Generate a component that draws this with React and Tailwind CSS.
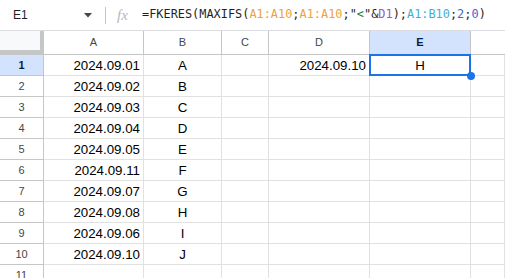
import React from 'react';

const cols = [
  { key: 'A', w: 'w-[100px]' },
  { key: 'B', w: 'w-[78px]' },
  { key: 'C', w: 'w-[47px]' },
  { key: 'D', w: 'w-[101px]' },
  { key: 'E', w: 'w-[101px]' },
  { key: 'F', w: 'flex-1' },
];

const rows = [
  ['2024.09.01', 'A', '', '2024.09.10', 'H'],
  ['2024.09.02', 'B'],
  ['2024.09.03', 'C'],
  ['2024.09.04', 'D'],
  ['2024.09.05', 'E'],
  ['2024.09.11', 'F'],
  ['2024.09.07', 'G'],
  ['2024.09.08', 'H'],
  ['2024.09.06', 'I'],
  ['2024.09.10', 'J'],
  [],
];

const FormulaBar = () => (
  <div className="flex h-[31px] items-center border-b border-[#dadce0] bg-white">
    <div className="flex w-[105px] items-center pl-[13px] pr-[12px] text-[12px] text-[#1f1f1f]">
      <span className="flex-1">E1</span>
      <svg width="8" height="5" viewBox="0 0 8 5" className="mr-[1px]">
        <path d="M0 0h8L4 4.5z" fill="#444746" />
      </svg>
    </div>
    <div className="h-[17px] w-px bg-[#c4c7c5]" />
    <span
      className="ml-[11px] w-[25px] text-[15px] italic text-[#b4b8bb]"
      style={{ fontFamily: '"Liberation Serif", serif' }}
    >
      fx
    </span>
    <div
      className="whitespace-pre text-[11.9px] text-[#1f1f1f]"
      style={{ fontFamily: '"DejaVu Sans Mono", monospace' }}
    >
      =FKERES(MAXIFS(
      <span className="text-[#f0a040]">A1:A10</span>;
      <span className="text-[#f0a040]">A1:A10</span>;
      <span className="text-[#1f1f1f]">"</span>
      <span className="text-[#188038]">&lt;</span>
      <span className="text-[#1f1f1f]">"</span>&amp;
      <span className="text-[#9b59c4]">D1</span>);
      <span className="text-[#3fb0d2]">A1:B10</span>;
      <span className="text-[#3c6bd9]">2</span>;
      <span className="text-[#5b5bd6]">0</span>)
    </div>
  </div>
);

const HeaderRow = () => (
  <div className="flex h-[24px] border-b border-[#c4c7c5]">
    <div className="w-[44px] border-b-4 border-r-4 border-[#c4c7c5] bg-[#f8f9fa]" />
    {cols.map((c) => (
      <div
        key={c.key}
        className={`${c.w} flex items-center justify-center border-r border-[#c4c7c5] text-[11px] ${
          c.key === 'E' ? 'bg-[#d3e3fd] font-bold text-[#041e49]' : 'text-[#444746]'
        } ${c.key === 'F' ? 'border-r-0' : ''}`}
      >
        {c.key === 'F' ? '' : c.key}
      </div>
    ))}
  </div>
);

const App = () => (
  <div
    className="h-[278px] w-[505px] overflow-hidden bg-white"
    style={{ fontFamily: '"Liberation Sans", Arial, sans-serif' }}
  >
    <FormulaBar />
    <HeaderRow />
    {rows.map((r, i) => (
      <div key={i} className="flex h-[21px]">
        <div
          className={`flex w-[44px] items-center justify-center border-b border-r border-[#c4c7c5] text-[11px] ${
            i === 0 ? 'bg-[#d3e3fd] font-bold text-[#041e49]' : 'text-[#444746]'
          }`}
        >
          {i + 1}
        </div>
        {cols.map((c, j) => {
          const v = r[j] || '';
          const right = j === 0 || j === 3;
          const sel = i === 0 && j === 4;
          return (
            <div
              key={c.key}
              className={`${c.w} relative flex items-end border-b border-r border-[#e1e1e1] px-[3px] text-[13.3px] leading-[19px] text-black ${
                right ? 'justify-end' : 'justify-center'
              }`}
            >
              {v}
              {sel && (
                <>
                  <div className="absolute -left-px -top-px bottom-[-1px] right-[-1px] border-2 border-[#1a73e8]" />
                  <div className="absolute bottom-[-5px] right-[-5px] z-10 h-[8px] w-[8px] rounded-full bg-[#1a73e8]" />
                </>
              )}
            </div>
          );
        })}
      </div>
    ))}
  </div>
);

export default App;
